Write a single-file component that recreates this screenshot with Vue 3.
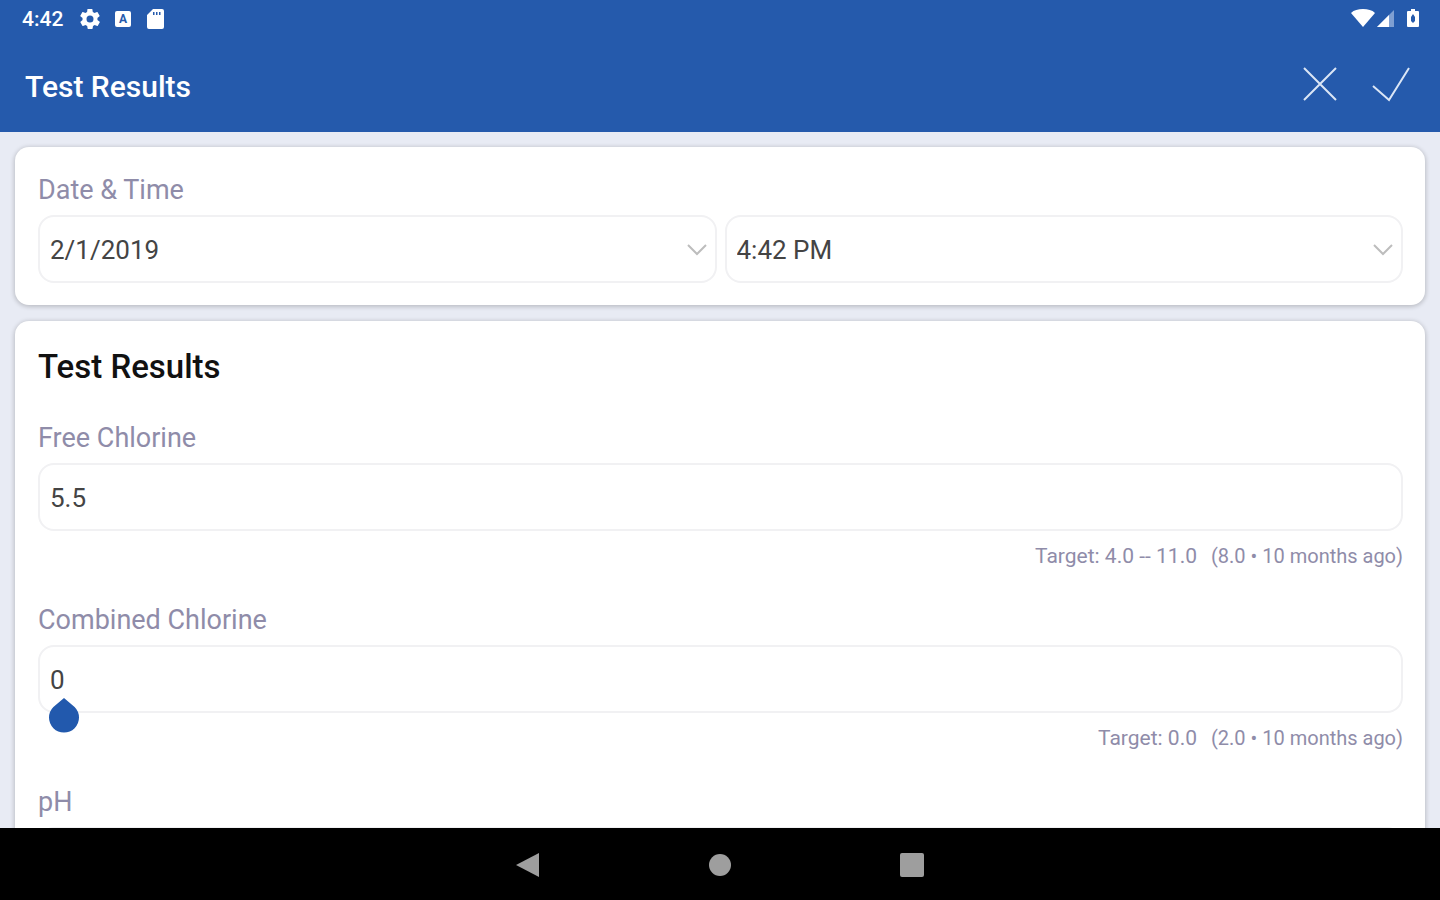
<template>
  <div class="screen">
    <header class="header">
      <div class="status-bar">
        <span class="clock">4:42</span>
        <svg class="status-icon" viewBox="2 2 20 20" aria-hidden="true">
          <path fill="#fff" fill-rule="evenodd" d="M19.4 13c0-.3.1-.6.1-1s0-.7-.1-1l2.1-1.700c.2-.2.2-.4.1-.6l-2-3.500c-.1-.2-.4-.3-.6-.2l-2.500 1c-.5-.4-1.100-.7-1.700-1l-.4-2.600c0-.2-.2-.4-.5-.4h-4c-.3 0-.5.2-.5.4L9.100 5c-.6.300-1.200.6-1.700 1l-2.500-1c-.2-.1-.5 0-.6.2l-2 3.500c-.1.2-.1.400.1.6L4.600 11c-.1.300-.1.700-.1 1s0 .7.1 1l-2.100 1.700c-.2.2-.2.400-.1.6l2 3.500c.1.2.4.300.6.2l2.500-1c.5.4 1.100.7 1.700 1l.4 2.600c0 .2.2.4.5.4h4c.3 0 .5-.2.5-.4l.4-2.600c.6-.3 1.200-.6 1.700-1l2.500 1c.2.1.5 0 .6-.2l2-3.500c.1-.2.100-.4-.1-.6zM12 15.500a3.500 3.500 0 1 1 0-7 3.500 3.500 0 0 1 0 7z" />
        </svg>
        <span class="letter-icon">A</span>
        <svg class="status-icon" viewBox="0 0 20 20" aria-hidden="true">
          <path fill="#fff" fill-rule="evenodd" d="M8 0h9a2 2 0 0 1 2 2v16a2 2 0 0 1-2 2H4a2 2 0 0 1-2-2V6zM8 3v3h1.500V3zM11 3v3h1.500V3zM14 3v3h1.500V3z" />
        </svg>
        <div class="system">
          <svg width="24" height="20" viewBox="0 0 24 20" aria-hidden="true">
            <path fill="#fff" d="M12 18L0 4C3 1 7 0 12 0S21 1 24 4z" />
          </svg>
          <svg width="18" height="20" viewBox="0 0 18 20" aria-hidden="true">
            <path fill="#7f9fd2" d="M17 1v17H0z" />
            <path fill="#fff" d="M12 6v12H0z" />
          </svg>
          <svg class="battery" width="12" height="20" viewBox="0 0 12 20" aria-hidden="true">
            <path fill="#fff" fill-rule="evenodd" d="M4 0h4v2h3a1 1 0 0 1 1 1v14a1 1 0 0 1-1 1H1a1 1 0 0 1-1-1V3a1 1 0 0 1 1-1h3zM6 5l-2 3v4l2 2 2-2V8z" />
          </svg>
        </div>
      </div>
      <div class="toolbar">
        <h1 class="title">Test Results</h1>
        <button class="action" type="button" aria-label="Cancel">
          <svg width="36" height="36" viewBox="0 0 36 36">
            <path class="stroke" d="M2 2l32 32M34 2L2 34" />
          </svg>
        </button>
        <button class="action" type="button" aria-label="Save">
          <svg width="38" height="36" viewBox="0 0 38 36">
            <path class="stroke" d="M1 20l16 14L37 2" />
          </svg>
        </button>
      </div>
    </header>

    <main class="content">
      <section class="card">
        <label class="label" for="date">Date &amp; Time</label>
        <div class="row">
          <div class="field">
            <select id="date" v-model="date" class="control">
              <option>2/1/2019</option>
            </select>
            <svg class="chevron" width="20" height="12" viewBox="0 0 20 12" aria-hidden="true">
              <path d="M1 1l9 9 9-9" />
            </svg>
          </div>
          <div class="field">
            <select v-model="time" class="control" aria-label="Time">
              <option>4:42 PM</option>
            </select>
            <svg class="chevron" width="20" height="12" viewBox="0 0 20 12" aria-hidden="true">
              <path d="M1 1l9 9 9-9" />
            </svg>
          </div>
        </div>
      </section>

      <section class="card">
        <h2 class="heading">Test Results</h2>
        <div v-for="test in tests" :key="test.id" class="test">
          <label class="label" :for="test.id">{{ test.name }}</label>
          <div class="field">
            <input :id="test.id" v-model="test.value" class="control" type="text" inputmode="decimal" />
            <svg v-if="test.active" class="handle" width="30" height="36" viewBox="0 0 30 36" aria-hidden="true">
              <path fill="#2259ad" d="M15 0l10.600 9A15 15 0 1 1 4.400 9z" />
            </svg>
          </div>
          <p class="hint">
            <span class="target">{{ test.target }}</span>
            <span>{{ test.last }}</span>
          </p>
        </div>
      </section>
    </main>

    <nav class="nav-bar">
      <button class="nav-button" type="button" aria-label="Back">
        <svg width="24" height="26" viewBox="0 0 24 26"><path fill="#9e9e9e" d="M0 13L23 1v24z" /></svg>
      </button>
      <button class="nav-button" type="button" aria-label="Home">
        <svg width="24" height="24" viewBox="0 0 24 24"><circle cx="12" cy="12" r="11" fill="#9e9e9e" /></svg>
      </button>
      <button class="nav-button" type="button" aria-label="Recent apps">
        <svg width="24" height="24" viewBox="0 0 24 24"><rect width="24" height="24" rx="2" fill="#9e9e9e" /></svg>
      </button>
    </nav>
  </div>
</template>

<script setup>
import { ref } from 'vue'

const date = ref('2/1/2019')
const time = ref('4:42 PM')

const tests = ref([
  {
    id: 'free-chlorine',
    name: 'Free Chlorine',
    value: '5.5',
    target: 'Target: 4.0 -- 11.0',
    last: '(8.0 • 10 months ago)'
  },
  {
    id: 'combined-chlorine',
    name: 'Combined Chlorine',
    value: '0',
    target: 'Target: 0.0',
    last: '(2.0 • 10 months ago)',
    active: true
  },
  { id: 'ph', name: 'pH', value: '' }
])
</script>

<style>
body {
  margin: 0;
}
</style>

<style scoped>
.screen {
  display: flex;
  flex-direction: column;
  height: 100vh;
  overflow: hidden;
  background-color: #e8ebf4;
  font-family: Roboto, sans-serif;
}

.header {
  flex-shrink: 0;
  background-color: #255aac;
  color: #fff;
}

.status-bar {
  display: flex;
  align-items: center;
  height: 38px;
  padding: 0 21px 0 22px;
}

.clock {
  width: 58px;
  font-size: 21px;
  font-weight: 500;
}

.status-icon {
  width: 20px;
  height: 20px;
}

.letter-icon {
  width: 16px;
  margin: 0 14px 0 15px;
  border-radius: 2px;
  background-color: #fff;
  color: #255aac;
  font-size: 12px;
  font-weight: 700;
  line-height: 16px;
  text-align: center;
}

.system {
  display: flex;
  gap: 2px;
  margin-left: auto;
}

.battery {
  margin-left: 10px;
}

.toolbar {
  display: flex;
  align-items: center;
  gap: 34px;
  height: 92px;
  padding: 0 30px 2px 25px;
}

.title {
  flex: 1;
  margin: 0;
  padding-top: 4px;
  font-size: 30px;
  font-weight: 500;
}

.action {
  display: flex;
  padding: 0;
  border: none;
  background: none;
  cursor: pointer;
}

.stroke {
  fill: none;
  stroke: #dbe6f6;
  stroke-width: 2;
}

.content {
  display: flex;
  flex: 1;
  flex-direction: column;
  gap: 16px;
  min-height: 0;
  padding: 15px 15px 0;
  overflow: hidden;
}

.card {
  flex-shrink: 0;
  padding: 23px 22px 22px 23px;
  border-radius: 14px;
  background-color: #fff;
  box-shadow: 0 1px 4px 1px #00000030;
}

.row {
  display: flex;
  gap: 8px;
}

.row .field {
  flex: 1;
}

.label {
  display: block;
  margin-bottom: 5px;
  color: #8f8ca9;
  font-size: 27px;
  line-height: 40px;
}

.field {
  position: relative;
}

.control {
  box-sizing: border-box;
  display: block;
  width: 100%;
  height: 68px;
  padding: 2px 10px 0;
  border: 2px solid #f1f1f3;
  border-radius: 16px;
  outline: none;
  appearance: none;
  background-color: #fff;
  color: #444;
  font-family: inherit;
  font-size: 26px;
}

.chevron {
  position: absolute;
  top: 29px;
  right: 10px;
  fill: none;
  stroke: #bdbdbd;
  stroke-width: 2;
  pointer-events: none;
}

.heading {
  margin: 0 0 28px;
  color: #111;
  font-size: 33px;
  font-weight: 500;
  line-height: 46px;
}

.test {
  margin-bottom: 19px;
}

.handle {
  position: absolute;
  top: 53px;
  left: 11px;
}

.hint {
  display: flex;
  align-items: baseline;
  justify-content: flex-end;
  gap: 14px;
  margin: 0;
  color: #8f8ca9;
  font-size: 20px;
  line-height: 50px;
}

.target {
  font-size: 21px;
}

.nav-bar {
  display: flex;
  flex-shrink: 0;
  justify-content: center;
  box-sizing: border-box;
  height: 72px;
  padding-top: 2px;
  background-color: #000;
}

.nav-button {
  display: flex;
  align-items: center;
  justify-content: center;
  width: 192px;
  padding: 0;
  border: none;
  background: none;
  cursor: pointer;
}
</style>
